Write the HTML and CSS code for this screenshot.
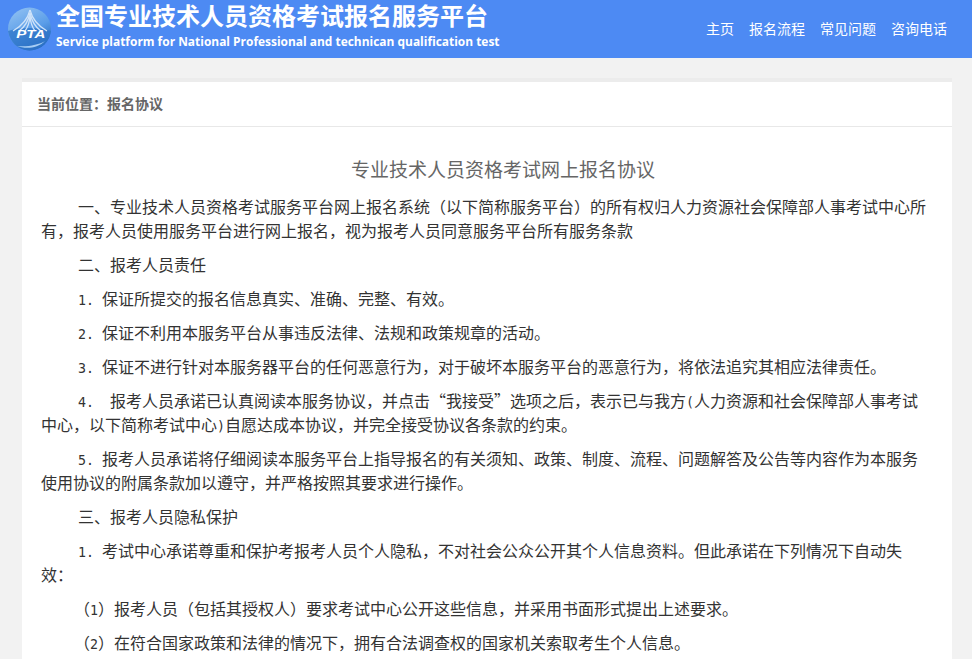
FILE: index.html
```html
<!DOCTYPE html>
<html lang="zh-CN">
<head>
<meta charset="utf-8">
<title>全国专业技术人员资格考试报名服务平台</title>
<link rel="stylesheet" href="styles.css">
</head>
<body>
<header class="topbar">
  <div class="brand">
    <svg class="logo" width="44" height="44" viewBox="0 0 44 44" aria-hidden="true">
      <defs>
        <linearGradient id="globe" x1="0.2" y1="0" x2="0.7" y2="1">
          <stop offset="0" stop-color="#8fc0f2"/>
          <stop offset="0.55" stop-color="#5a9de8"/>
          <stop offset="1" stop-color="#1f62b8"/>
        </linearGradient>
      </defs>
      <circle cx="22.500" cy="22" r="21.500" fill="url(#globe)"/>
      <path d="M1 24C12 20 33 20 44 24C42 36 33 43 22.500 43.500C12 43 3 36 1 24Z" fill="#2f75c8" opacity="0.75"/>
      <g fill="none" stroke="#cfe3f9" stroke-width="1.300">
        <path d="M23 3C21 11 15 19 6 24"/>
        <path d="M23 3C25 11 31 19 40 24"/>
        <path d="M23 6C21.500 13 18 20 12 24"/>
        <path d="M23 6C24.500 13 28 20 34 24"/>
        <path d="M23 9C22.500 15 21 20 18 24"/>
        <path d="M23 9C23.500 15 25 20 28 24"/>
      </g>
      <path d="M10 39C18 42 30 42 38 34C32 38 20 40 10 39Z" fill="#a6cdf4"/>
      <text x="23.800" y="31" text-anchor="middle" textLength="29" lengthAdjust="spacingAndGlyphs" class="logo-text">PTA</text>
    </svg>
    <div class="brand-text">
      <h1 class="brand-title">全国专业技术人员资格考试报名服务平台</h1>
      <p class="brand-sub">Service platform for National Professional and technican qualification test</p>
    </div>
  </div>
  <nav class="nav">
    <a class="nav-link">主页</a>
    <a class="nav-link">报名流程</a>
    <a class="nav-link">常见问题</a>
    <a class="nav-link">咨询电话</a>
  </nav>
</header>
<main class="card">
  <div class="crumb">当前位置：报名协议</div>
  <article class="agreement">
    <h2 class="agreement-title">专业技术人员资格考试网上报名协议</h2>
    <p>一、专业技术人员资格考试服务平台网上报名系统（以下简称服务平台）的所有权归人力资源社会保障部人事考试中心所有，报考人员使用服务平台进行网上报名，视为报考人员同意服务平台所有服务条款</p>
    <p>二、报考人员责任</p>
    <p><span class="num">1. </span>保证所提交的报名信息真实、准确、完整、有效。</p>
    <p><span class="num">2. </span>保证不利用本服务平台从事违反法律、法规和政策规章的活动。</p>
    <p><span class="num">3. </span>保证不进行针对本服务器平台的任何恶意行为，对于破坏本服务平台的恶意行为，将依法追究其相应法律责任。</p>
    <p><span class="num">4.&nbsp;&nbsp;</span>报考人员承诺已认真阅读本服务协议，并点击“我接受”选项之后，表示已与我方<span class="num">(</span>人力资源和社会保障部人事考试中心，以下简称考试中心<span class="num">)</span>自愿达成本协议，并完全接受协议各条款的约束。</p>
    <p><span class="num">5. </span>报考人员承诺将仔细阅读本服务平台上指导报名的有关须知、政策、制度、流程、问题解答及公告等内容作为本服务使用协议的附属条款加以遵守，并严格按照其要求进行操作。</p>
    <p>三、报考人员隐私保护</p>
    <p><span class="num">1. </span>考试中心承诺尊重和保护考报考人员个人隐私，不对社会公众公开其个人信息资料。但此承诺在下列情况下自动失效：</p>
    <p class="sub">（<span class="num">1</span>）报考人员（包括其授权人）要求考试中心公开这些信息，并采用书面形式提出上述要求。</p>
    <p class="sub">（<span class="num">2</span>）在符合国家政策和法律的情况下，拥有合法调查权的国家机关索取考生个人信息。</p>
  </article>
</main>
</body>
</html>
```
FILE: styles.css
```css
* { box-sizing: border-box; }
html, body { margin: 0; padding: 0; height: 659px; overflow: hidden; }
body {
  display: flex;
  flex-direction: column;
  background: #f2f2f2;
  font-family: "Noto Sans CJK SC", "Liberation Sans", sans-serif;
  color: #333;
  text-spacing-trim: space-all;
}
.topbar {
  flex: none;
  height: 58px;
  background: #4d8af3;
  display: flex;
  justify-content: space-between;
  align-items: flex-start;
  padding: 0 25px 0 7px;
  color: #fff;
}
.brand { display: flex; gap: 5px; }
.logo { margin-top: 7px; flex: none; }
.logo-text { font: italic 700 10px "Liberation Sans", sans-serif; fill: #fff; }
.brand-title {
  margin: 0;
  font-size: 24px;
  line-height: 29px;
  font-weight: 700;
  white-space: nowrap;
}
.brand-sub {
  margin: 5px 0 0;
  font-family: "Open Sans", "Liberation Sans", sans-serif;
  font-size: 11.95px;
  line-height: 16px;
  font-weight: 700;
  white-space: nowrap;
}
.nav { display: flex; gap: 15px; padding-top: 17px; }
.nav-link { font-size: 14px; line-height: 22px; color: #fff; }
.card {
  flex: 1;
  min-height: 0;
  margin: 20px 20px 0 22px;
  background: #fff;
  border-top: 4px solid #ececec;
}
.crumb {
  height: 45px;
  padding-left: 15px;
  font-size: 14px;
  font-weight: 700;
  line-height: 43px;
  color: #666;
  border-bottom: 1px solid #e8e8e8;
}
.agreement { padding: 28px 24px 0 19px; }
.agreement-title {
  margin: 0 0 11px;
  text-align: center;
  text-indent: 37px;
  font-size: 19px;
  font-weight: 400;
  line-height: 28px;
  color: #666;
}
.agreement p {
  margin: 0 0 10px;
  font-size: 16px;
  line-height: 24px;
  text-indent: 37px;
  color: #333;
}
.agreement p.sub { text-indent: 33px; }
.num {
  font-family: "DejaVu Sans Mono", monospace;
  font-size: 13.28px;
  line-height: 0;
  white-space: pre;
}
```
